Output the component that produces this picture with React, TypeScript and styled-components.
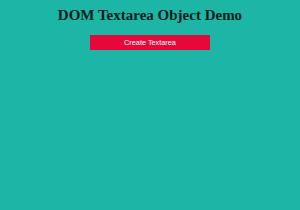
import React from "react";
import styled, { createGlobalStyle } from "styled-components";

const Global = createGlobalStyle`
  html, body { margin: 0; padding: 0; }
  body { background: #1db5a6; width: 300px; height: 210px; overflow: hidden; }
`;

const Page = styled.div`
  display: flex;
  flex-direction: column;
  align-items: center;
  padding-top: 7px;
`;

const Title = styled.h1`
  margin: 0;
  font-family: "Liberation Serif", "Times New Roman", serif;
  font-weight: bold;
  font-size: 15px;
  line-height: 17px;
  color: #0a1c1a;
`;

const Button = styled.button`
  margin-top: 11px;
  width: 120px;
  height: 15px;
  border: none;
  padding: 0;
  background: #e8073a;
  color: #ffffff;
  font-family: "Liberation Sans", Arial, sans-serif;
  font-size: 7.3px;
  line-height: 15px;
  cursor: pointer;
`;

export default function App() {
  return (
    <>
      <Global />
      <Page>
        <Title>DOM Textarea Object Demo</Title>
        <Button>Create Textarea</Button>
      </Page>
    </>
  );
}
